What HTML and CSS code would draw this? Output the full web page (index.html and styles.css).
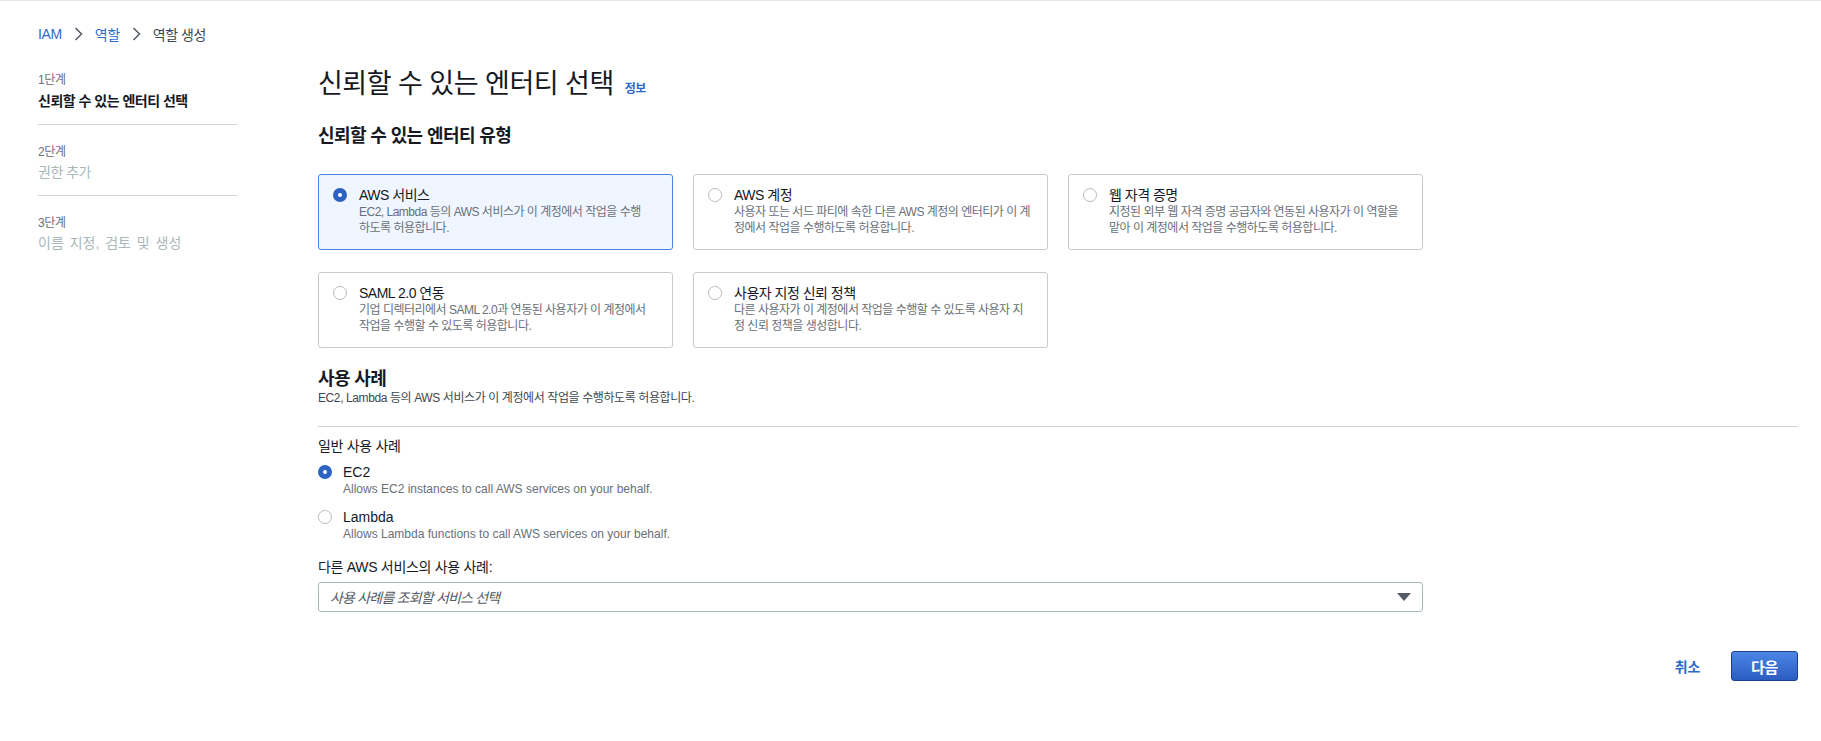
FILE: index.html
```html
<!DOCTYPE html>
<html lang="ko">
<head>
<meta charset="utf-8">
<title>역할 생성 - IAM</title>
<link rel="stylesheet" href="styles.css">
</head>
<body>
<div class="app">
  <nav class="breadcrumb">
    <a class="crumb-link" href="#">IAM</a>
    <svg class="chev" width="9" height="14" viewBox="0 0 9 14"><polyline points="1.5,1 7.5,7 1.5,13" fill="none" stroke="#545b64" stroke-width="1.5"/></svg>
    <a class="crumb-link" href="#">역할</a>
    <svg class="chev" width="9" height="14" viewBox="0 0 9 14"><polyline points="1.5,1 7.5,7 1.5,13" fill="none" stroke="#545b64" stroke-width="1.5"/></svg>
    <span class="crumb-current">역할 생성</span>
  </nav>

  <div class="layout">
    <aside class="steps">
      <div class="step">
        <div class="step-num">1단계</div>
        <div class="step-title active">신뢰할 수 있는 엔터티 선택</div>
      </div>
      <div class="step">
        <div class="step-num">2단계</div>
        <div class="step-title">권한 추가</div>
      </div>
      <div class="step">
        <div class="step-num">3단계</div>
        <div class="step-title wide">이름 지정, 검토 및 생성</div>
      </div>
    </aside>

    <main class="content">
      <h1 class="page-title">신뢰할 수 있는 엔터티 선택<a class="info" href="#">정보</a></h1>
      <h2 class="section-title">신뢰할 수 있는 엔터티 유형</h2>

      <div class="tiles">
        <div class="tile selected">
          <span class="radio checked"></span>
          <div class="tile-body">
            <div class="tile-title">AWS 서비스</div>
            <div class="tile-desc">EC2, Lambda 등의 AWS 서비스가 이 계정에서 작업을 수행<br>하도록 허용합니다.</div>
          </div>
        </div>
        <div class="tile">
          <span class="radio"></span>
          <div class="tile-body">
            <div class="tile-title">AWS 계정</div>
            <div class="tile-desc">사용자 또는 서드 파티에 속한 다른 AWS 계정의 엔터티가 이 계<br>정에서 작업을 수행하도록 허용합니다.</div>
          </div>
        </div>
        <div class="tile">
          <span class="radio"></span>
          <div class="tile-body">
            <div class="tile-title">웹 자격 증명</div>
            <div class="tile-desc">지정된 외부 웹 자격 증명 공급자와 연동된 사용자가 이 역할을<br>맡아 이 계정에서 작업을 수행하도록 허용합니다.</div>
          </div>
        </div>
        <div class="tile">
          <span class="radio"></span>
          <div class="tile-body">
            <div class="tile-title">SAML 2.0 연동</div>
            <div class="tile-desc">기업 디렉터리에서 SAML 2.0과 연동된 사용자가 이 계정에서<br>작업을 수행할 수 있도록 허용합니다.</div>
          </div>
        </div>
        <div class="tile">
          <span class="radio"></span>
          <div class="tile-body">
            <div class="tile-title">사용자 지정 신뢰 정책</div>
            <div class="tile-desc">다른 사용자가 이 계정에서 작업을 수행할 수 있도록 사용자 지<br>정 신뢰 정책을 생성합니다.</div>
          </div>
        </div>
      </div>

      <h2 class="section-title usecase-title">사용 사례</h2>
      <p class="section-desc">EC2, Lambda 등의 AWS 서비스가 이 계정에서 작업을 수행하도록 허용합니다.</p>
      <hr class="divider">

      <div class="field-label">일반 사용 사례</div>
      <div class="options">
        <div class="option">
          <span class="radio checked"></span>
          <div>
            <div class="option-title">EC2</div>
            <div class="option-desc">Allows EC2 instances to call AWS services on your behalf.</div>
          </div>
        </div>
        <div class="option">
          <span class="radio"></span>
          <div>
            <div class="option-title">Lambda</div>
            <div class="option-desc">Allows Lambda functions to call AWS services on your behalf.</div>
          </div>
        </div>
      </div>

      <div class="field-label other-label">다른 AWS 서비스의 사용 사례:</div>
      <div class="select">
        <span class="placeholder">사용 사례를 조회할 서비스 선택</span>
        <svg class="caret" width="14" height="8" viewBox="0 0 14 8"><polygon points="0,0 14,0 7,8" fill="#545b64"/></svg>
      </div>

      <div class="actions">
        <a class="cancel" href="#">취소</a>
        <button class="primary" type="button">다음</button>
      </div>
    </main>
  </div>
</div>
</body>
</html>
```

FILE: styles.css
```css
* { box-sizing: border-box; }

body {
  margin: 0;
  background: #ffffff;
  font-family: "Liberation Sans", "Noto Sans CJK KR", sans-serif;
  color: #16191f;
}

.app {
  border-top: 1px solid #e4e6e8;
  padding: 23px 23px 40px 38px;
}

/* breadcrumb */
.breadcrumb {
  display: flex;
  align-items: center;
  gap: 12px;
  height: 20px;
  font-size: 14px;
  letter-spacing: -0.4px;
}
.crumb-link {
  color: #2f6bc7;
  text-decoration: none;
}
.crumb-current {
  color: #414750;
}
.chev { display: block; }

/* layout */
.layout {
  display: flex;
  gap: 80px;
  margin-top: 22px;
}

.steps {
  width: 200px;
  flex: none;
}
.step {
  padding: 19px 0 13px;
  border-bottom: 1px solid #d5d9dd;
}
.step:first-child { padding-top: 6px; }
.step:last-child { border-bottom: none; }
.step-num {
  font-size: 12px;
  line-height: 16px;
  color: #687078;
  letter-spacing: -0.4px;
}
.step-title {
  margin-top: 2px;
  font-size: 14px;
  line-height: 20px;
  color: #aab7b8;
  letter-spacing: -0.5px;
}
.step-title.active {
  margin-top: 3px;
  color: #16191f;
  font-weight: 700;
}
.step-title.wide {
  word-spacing: 2px;
  letter-spacing: 0;
}

.content {
  flex: 1;
  min-width: 0;
}

.page-title {
  margin: 0;
  font-size: 27px;
  line-height: 36px;
  font-weight: 400;
  letter-spacing: -0.5px;
  color: #16191f;
}
.info {
  margin-left: 11px;
  font-size: 12px;
  font-weight: 700;
  letter-spacing: -0.5px;
  color: #2f6bc7;
  text-decoration: none;
}

.section-title {
  margin: 17px 0 0;
  font-size: 18px;
  line-height: 24px;
  font-weight: 700;
  letter-spacing: -0.6px;
}

/* tiles */
.tiles {
  margin-top: 26px;
  max-width: 1105px;
  display: grid;
  grid-template-columns: repeat(3, 1fr);
  gap: 22px 20px;
}
.tile {
  display: flex;
  align-items: flex-start;
  gap: 12px;
  padding: 11px 6px 13px 14px;
  border: 1px solid #c6cacf;
  border-radius: 3px;
  background: #ffffff;
}
.tile.selected {
  border-color: #4a84e0;
  background: #f0f6ff;
}
.tile-body { min-width: 0; }
.tile-title {
  font-size: 14px;
  line-height: 18px;
  letter-spacing: -0.5px;
  color: #16191f;
  white-space: nowrap;
}
.tile-desc {
  font-size: 12px;
  line-height: 16px;
  letter-spacing: -0.5px;
  color: #687078;
  white-space: nowrap;
}

/* radios */
.radio {
  flex: none;
  width: 14px;
  height: 14px;
  margin-top: 2px;
  border-radius: 50%;
  border: 1px solid #b4bcc2;
  background: #ffffff;
}
.radio.checked {
  border: 5px solid #2d62c4;
}

/* use case */
.usecase-title {
  margin-top: 20px;
  line-height: 22px;
}
.section-desc {
  margin: 0;
  font-size: 12px;
  line-height: 16px;
  letter-spacing: -0.4px;
  color: #414750;
}
.divider {
  margin: 20px 0 0;
  border: none;
  border-top: 1px solid #cfd3d7;
  height: 0;
}

.field-label {
  margin-top: 9px;
  font-size: 14px;
  line-height: 20px;
  letter-spacing: -0.3px;
  color: #16191f;
}

.options {
  margin-top: 7px;
  display: flex;
  flex-direction: column;
  gap: 11px;
}
.option {
  display: flex;
  align-items: flex-start;
  gap: 11px;
}
.option-title {
  font-size: 14px;
  line-height: 18px;
  color: #16191f;
}
.option-desc {
  font-size: 12px;
  line-height: 16px;
  color: #687078;
}

.other-label { margin-top: 15px; }

.select {
  margin-top: 5px;
  max-width: 1105px;
  height: 30px;
  border: 1px solid #aab7b8;
  border-radius: 3px;
  padding: 0 11px 0 11px;
  display: flex;
  align-items: center;
  justify-content: space-between;
}
.placeholder {
  font-size: 14px;
  font-style: italic;
  letter-spacing: -0.8px;
  color: #545b64;
}
.caret { display: block; }

.actions {
  margin-top: 39px;
  display: flex;
  justify-content: flex-end;
  align-items: center;
  gap: 31px;
}
.cancel {
  font-size: 14px;
  font-weight: 700;
  letter-spacing: -0.3px;
  color: #2f6bc7;
  text-decoration: none;
}
.primary {
  height: 30px;
  padding: 0 19px;
  border: 1px solid #1d3f8f;
  border-radius: 3px;
  background: linear-gradient(#4a86e6, #2c5dc0);
  color: #ffffff;
  font-family: "Liberation Sans", "Noto Sans CJK KR", sans-serif;
  font-size: 15px;
  font-weight: 700;
  letter-spacing: -0.3px;
}
```
